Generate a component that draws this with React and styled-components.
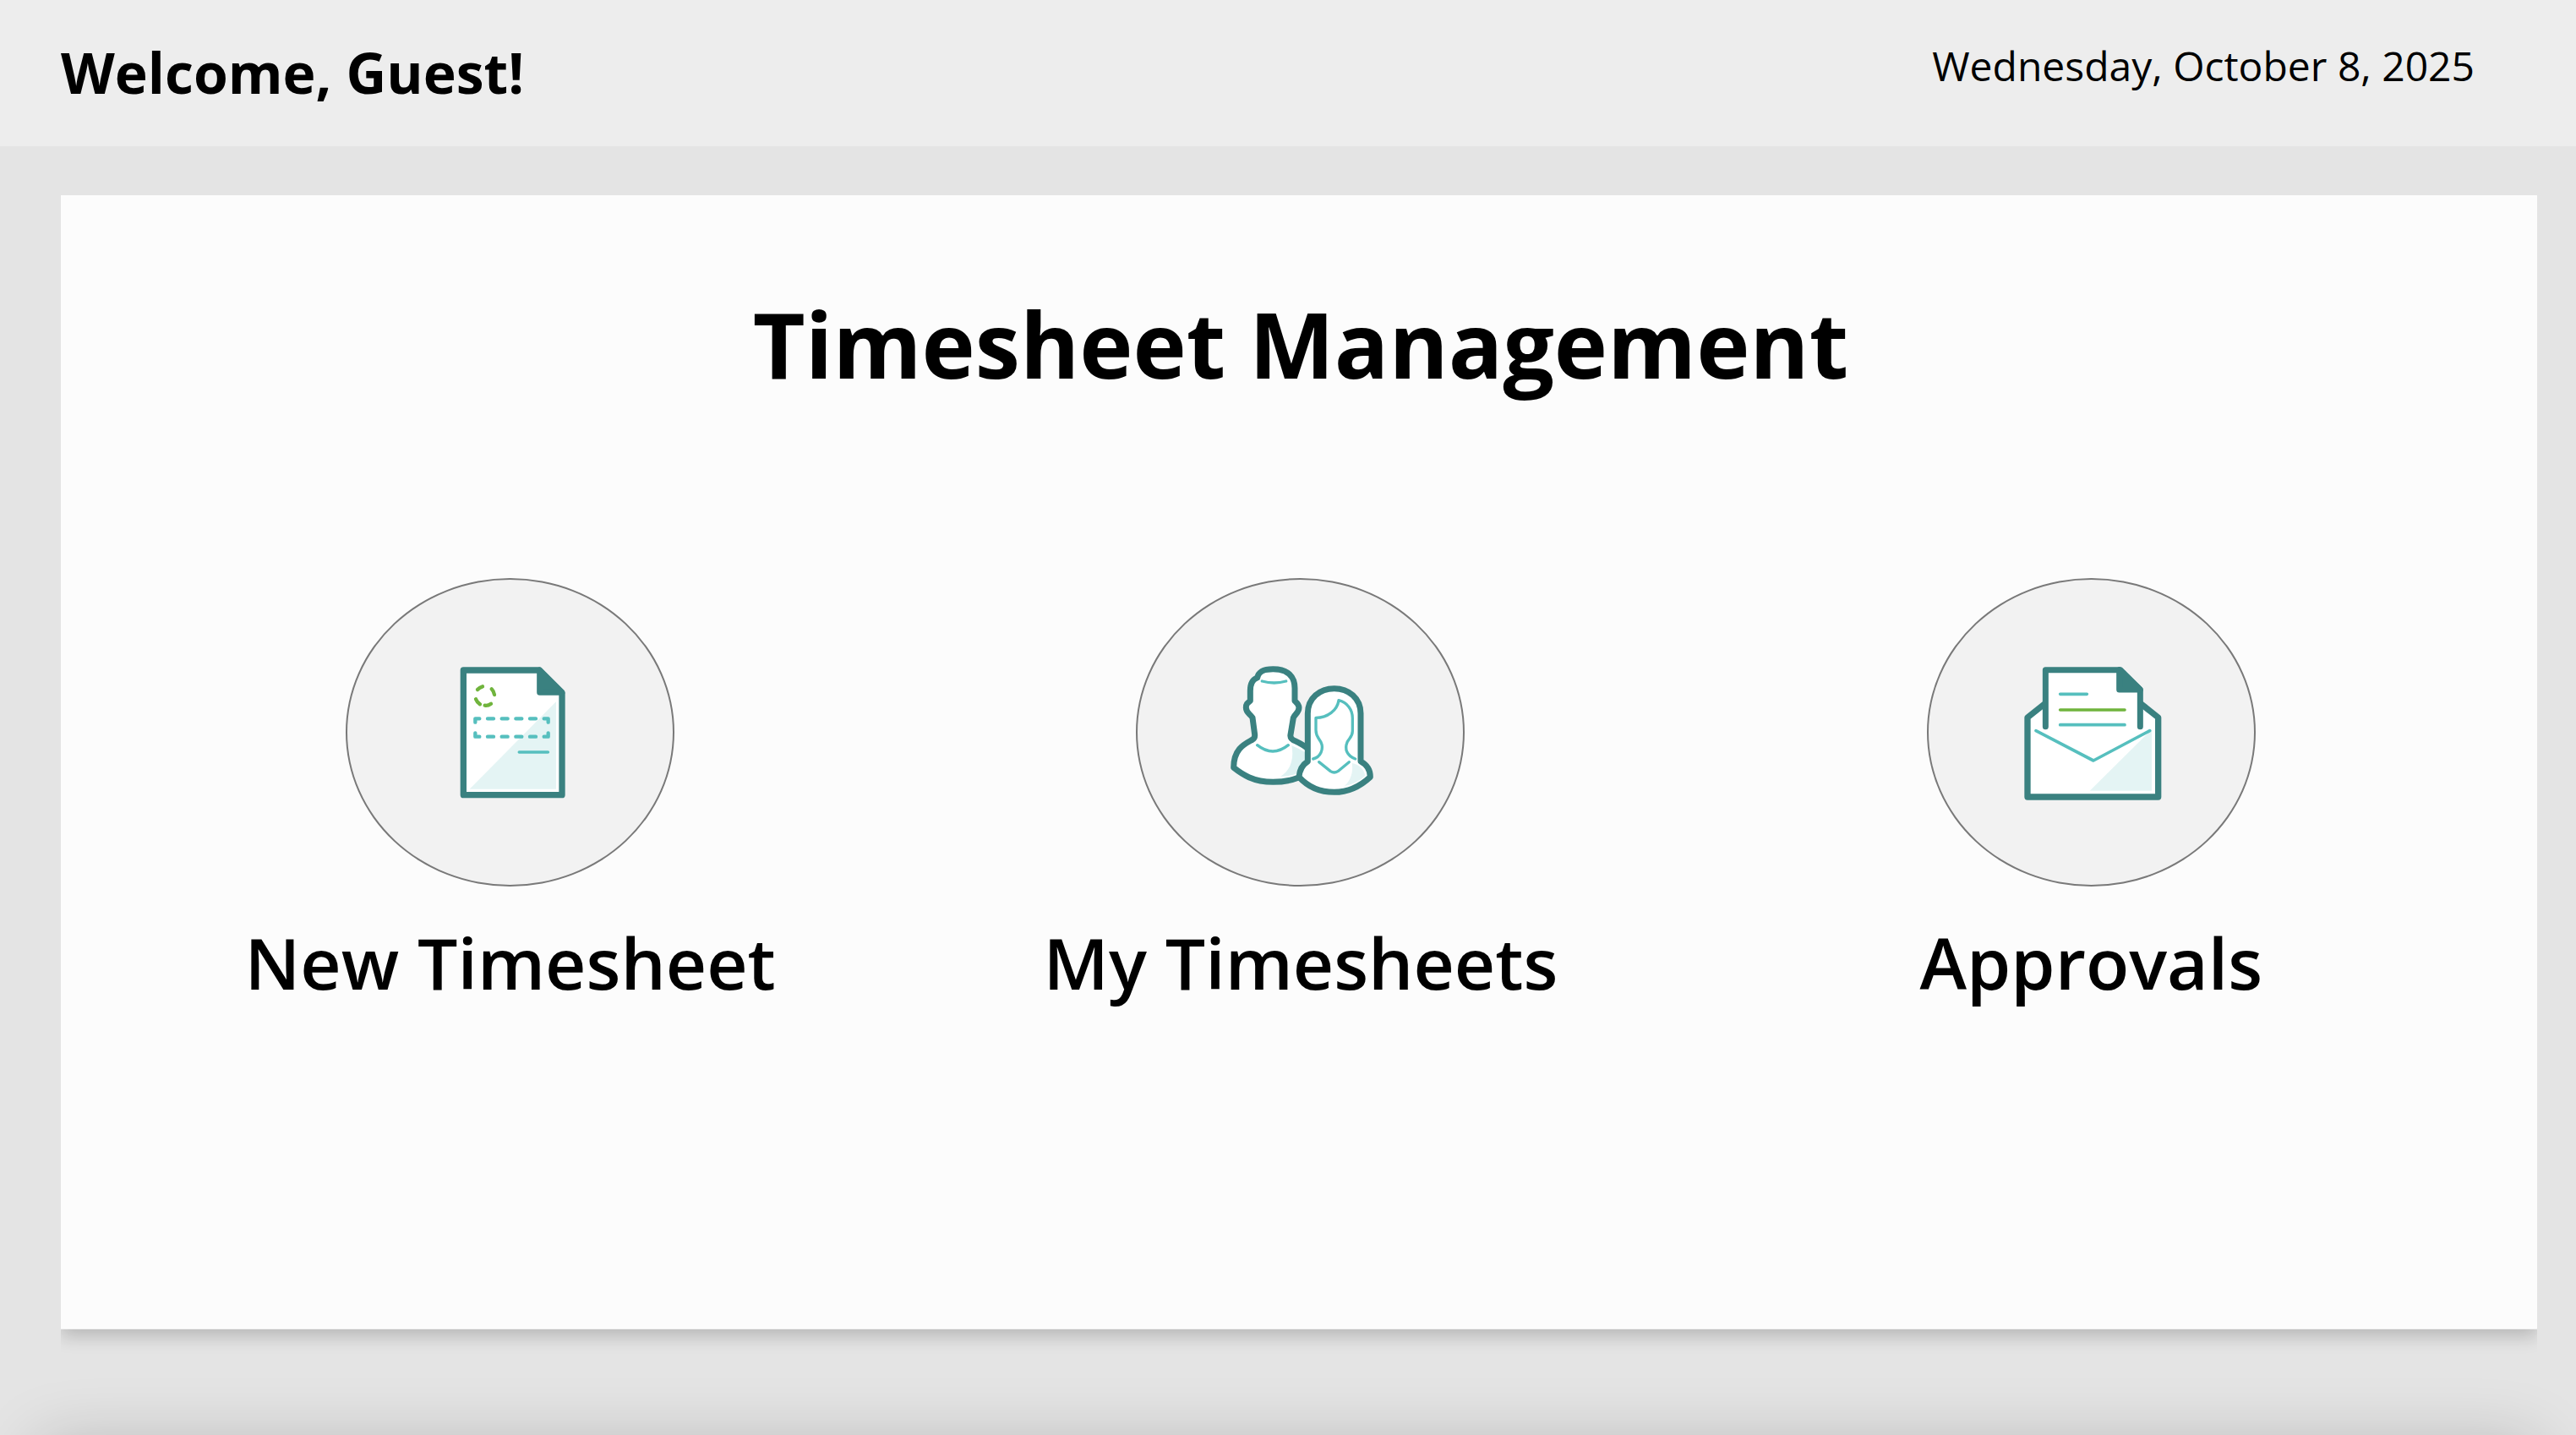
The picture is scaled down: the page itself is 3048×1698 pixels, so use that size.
import React from "react";
import styled, { createGlobalStyle } from "styled-components";

const GlobalStyle = createGlobalStyle`
  *, *::before, *::after { box-sizing: border-box; }
  body {
    margin: 0;
    background: #e4e4e4;
    color: #000;
    font-family: "Open Sans", "Noto Sans", sans-serif;
  }
  h1, h2, p { margin: 0; }
`;

const Page = styled.div`
  min-height: 100vh;
  display: flex;
  flex-direction: column;
`;

const Header = styled.header`
  display: flex;
  justify-content: space-between;
  align-items: flex-start;
  padding: 45px 120px 48px 72px;
  background: #ededed;
`;

const Welcome = styled.p`
  font-size: 66px;
  line-height: 80px;
  font-weight: 700;
`;

const Today = styled.time`
  font-size: 48px;
  line-height: 66px;
`;

const Main = styled.main`
  flex: 1;
  display: flex;
  padding: 58px 46px 0 72px;
`;

const Panel = styled.section`
  flex: 1;
  padding: 104px 60px 0 64px;
  background: #fcfcfc;
  border-bottom: 1px solid #f2f2f2;
  box-shadow: 0 8px 20px rgba(0, 0, 0, 0.2);
  clip-path: inset(0 0 -40px 0);
`;

const Title = styled.h1`
  font-size: 107px;
  line-height: 144px;
  font-weight: 700;
  text-align: center;
`;

const Actions = styled.nav`
  display: grid;
  grid-template-columns: repeat(3, 1fr);
  margin-top: 205px;
`;

const Action = styled.a`
  display: flex;
  flex-direction: column;
  align-items: center;
  gap: 30px;
  color: inherit;
  text-decoration: none;
`;

const Disc = styled.span`
  display: flex;
  align-items: center;
  justify-content: center;
  width: 389px;
  height: 365px;
  border: 2px solid #797979;
  border-radius: 50%;
  background: #f2f2f2;
`;

const Icon = styled.svg`
  width: 200px;
  height: 200px;
  fill: none;
  stroke-linecap: round;
  stroke-linejoin: round;
`;

const Label = styled.span`
  font-size: 84px;
  line-height: 120px;
  font-weight: 600;
`;

const Footer = styled.footer`
  height: 125px;
  overflow: hidden;
  display: flex;
  align-items: flex-end;
  padding: 0 46px;

  &::after {
    content: "";
    flex: 1;
    height: 100px;
    margin-bottom: -110px;
    box-shadow: 0 0 80px rgba(0, 0, 0, 0.2);
  }
`;

const DARK = "#3a8180";
const TEAL = "#56bfbe";
const GREEN = "#70b43d";
const TINT = "#e4f4f4";

function SheetIcon() {
  return (
    <Icon viewBox="-51 -12 600 600" aria-hidden="true">
      <path d="M82 66H350L432 148V509H82Z" fill="#fff" stroke={DARK} strokeWidth="22" />
      <path d="M411 178V488H104Z" fill={TINT} />
      <path d="M353 66V145H432Z" fill={DARK} stroke={DARK} strokeWidth="21" />
      <g stroke={GREEN} strokeWidth="13">
        <path d="M132 135Q139 127 150 124" />
        <path d="M182 133Q190 141 192 153" />
        <path d="M126 169Q130 180 141 187" />
        <path d="M158 191Q169 193 180 185" />
      </g>
      <g stroke={TEAL} strokeWidth="13">
        <path d="M124 251V238H139M368 238H383V251M124 289V302H139M368 302H383V289" />
        <path d="M168 238H189M218 238H239M268 238H289M318 238H339" />
        <path d="M168 302H189M218 302H239M268 302H289M318 302H339" />
      </g>
      <path d="M280 357H382" stroke={TEAL} strokeWidth="11" />
    </Icon>
  );
}

function PeopleIcon() {
  return (
    <Icon viewBox="-6 -12 600 600" aria-hidden="true">
      <path
        d="M56 412C56 345 95 328 122 313Q132 308 131 295L123 235C115 221 100 218 100 199C100 185 106 182 115 175V140C115 110 124 98 140 93C145 66 170 62 196 62C250 62 273 90 273 130V175C282 183 288 187 288 199C288 217 274 221 268 235L258 295Q256 307 266 313C300 330 345 345 345 412C310 440 270 463 196 463C125 463 85 435 56 412Z"
        fill="#fff"
        stroke={DARK}
        strokeWidth="21"
      />
      <path d="M262 334C272 385 255 425 222 443C260 442 285 434 310 420V358Q286 343 262 334Z" fill="#ddf2f2" />
      <path d="M157 105Q200 117 242 105M140 332Q195 376 250 332" stroke={TEAL} strokeWidth="10" />
      <path
        d="M319 390V220C319 165 362 131 413 131C464 131 507 165 507 220V390C530 402 541 422 541 445C510 474 470 499 413 499C358 499 316 476 288 445C290 420 300 402 319 390Z"
        fill="#fff"
        stroke={DARK}
        strokeWidth="21"
      />
      <path d="M476 396C482 430 470 460 449 477C480 472 505 458 523 441C518 414 500 401 476 396Z" fill={TINT} />
      <path
        d="M338 381C365 375 377 345 366 322C358 306 348 301 348 279V235C390 235 424 208 429 173C458 180 478 205 478 236V282C478 302 466 308 459 322C449 346 458 370 488 381"
        stroke={TEAL}
        strokeWidth="10"
      />
      <path d="M359 392L400 425Q413 433 426 425L466 392" stroke={TEAL} strokeWidth="10" />
    </Icon>
  );
}

function EnvelopeIcon() {
  return (
    <Icon viewBox="-21 -12 600 600" aria-hidden="true">
      <path d="M118 183L54 234V516H518V234L454 183" fill="#fff" stroke={DARK} strokeWidth="22" />
      <path d="M118 266V65H384L454 135V266" fill="#fff" stroke={DARK} strokeWidth="21" />
      <path d="M380 65V135H454Z" fill={DARK} stroke={DARK} strokeWidth="21" />
      <path d="M495 276V494H275Z" fill={TINT} />
      <path d="M170 151H265M170 260H399" stroke={TEAL} strokeWidth="11" />
      <path d="M170 207H399" stroke={GREEN} strokeWidth="11" />
      <path d="M84 281L288 387L488 281" stroke={TEAL} strokeWidth="11" />
    </Icon>
  );
}

const ACTIONS = [
  { id: "new", label: "New Timesheet", Drawing: SheetIcon },
  { id: "mine", label: "My Timesheets", Drawing: PeopleIcon },
  { id: "approvals", label: "Approvals", Drawing: EnvelopeIcon },
];

export default function App() {
  return (
    <Page>
      <GlobalStyle />
      <Header>
        <Welcome>Welcome, Guest!</Welcome>
        <Today dateTime="2025-10-08">Wednesday, October 8, 2025</Today>
      </Header>
      <Main>
        <Panel>
          <Title>Timesheet Management</Title>
          <Actions>
            {ACTIONS.map(({ id, label, Drawing }) => (
              <Action key={id} href={`#${id}`}>
                <Disc>
                  <Drawing />
                </Disc>
                <Label>{label}</Label>
              </Action>
            ))}
          </Actions>
        </Panel>
      </Main>
      <Footer />
    </Page>
  );
}
